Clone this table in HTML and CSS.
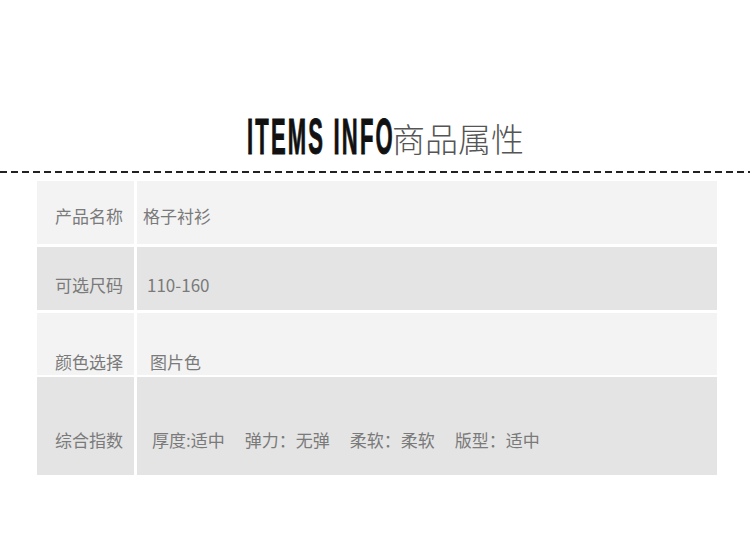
FILE: index.html
```html
<!DOCTYPE html>
<html lang="zh">
<head>
<meta charset="utf-8">
<title>ITEMS INFO 商品属性</title>
<link rel="stylesheet" href="styles.css">
</head>
<body>
  <header class="title">
    <span class="title-en">ITEMS INFO</span>
    <span class="title-cn">商品属性</span>
  </header>
  <div class="dash"></div>
  <div class="table">
    <div class="row row-light row-1">
      <div class="cell label">产品名称</div>
      <div class="cell value">格子衬衫</div>
    </div>
    <div class="row row-dark row-2">
      <div class="cell label">可选尺码</div>
      <div class="cell value">110-160</div>
    </div>
    <div class="row row-light row-3">
      <div class="cell label">颜色选择</div>
      <div class="cell value">图片色</div>
    </div>
    <div class="row row-dark row-4">
      <div class="cell label">综合指数</div>
      <div class="cell value attrs">
        <span>厚度:适中</span>
        <span>弹力：无弹</span>
        <span>柔软：柔软</span>
        <span>版型：适中</span>
      </div>
    </div>
  </div>
</body>
</html>
```

FILE: styles.css
```css
html, body {
  margin: 0;
  padding: 0;
  background: #ffffff;
}

body {
  width: 750px;
  height: 544px;
  overflow: hidden;
  font-family: "Noto Sans CJK SC", "Noto Sans", sans-serif;
}

.title {
  display: flex;
  align-items: flex-end;
  padding: 115px 0 0 247px;
  height: 47px;
}

.title-en {
  display: inline-block;
  width: 145px;
  white-space: nowrap;
  font-family: "Liberation Sans", Arial, sans-serif;
  font-weight: 700;
  font-size: 50px;
  line-height: 49px;
  letter-spacing: 5px;
  color: #111;
  -webkit-text-stroke: 1px #111;
  transform: scaleX(0.44);
  transform-origin: 0 0;
}

.title-cn {
  margin-left: 0;
  margin-bottom: 4px;
  font-family: "Noto Sans CJK SC", sans-serif;
  font-weight: 200;
  font-size: 33px;
  line-height: 40px;
  color: #555;
}

.dash {
  margin-top: 9px;
  height: 2px;
  background: repeating-linear-gradient(90deg, #222 0 7px, transparent 7px 11px);
}

.table {
  margin: 8px 0 0 37px;
  width: 680px;
  display: flex;
  flex-direction: column;
  gap: 3px;
}

.row {
  display: flex;
  gap: 3px;
}

.row-1 { height: 63px; }
.row-2 { height: 63px; }
.row-3 { height: 62px; margin-bottom: -1px; }
.row-4 { height: 98px; }

.row-light .cell { background: #f3f3f3; }
.row-dark .cell { background: #e4e4e4; }

.cell {
  box-sizing: border-box;
  font-size: 17px;
  line-height: 17px;
  color: #7a7a7a;
  white-space: nowrap;
}

.label {
  width: 97px;
  flex: none;
  padding-left: 18px;
}

.value {
  flex: 1;
}

.row-1 .cell { padding-top: 26px; }
.row-2 .cell { padding-top: 29px; }
.row-3 .cell { padding-top: 40px; }
.row-4 .cell { padding-top: 54px; }

.row-1 .value { padding-left: 6px; }
.row-2 .value { padding-left: 10px; }
.row-3 .value { padding-left: 13px; }
.row-4 .value { padding-left: 15px; }

.attrs {
  display: flex;
  align-items: flex-start;
  gap: 20px;
}
```
